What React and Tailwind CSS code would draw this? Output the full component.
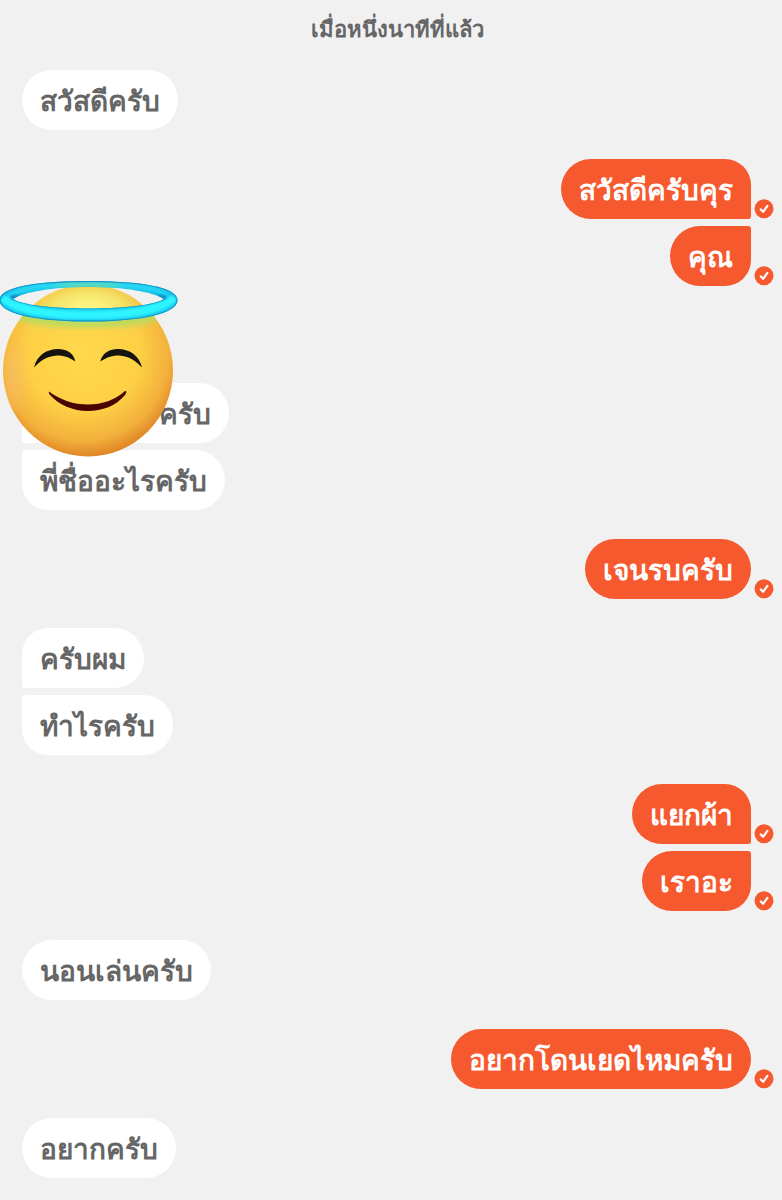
import React from 'react';

const groups = [
  { id: 1, from: 'them', messages: ['สวัสดีครับ'] },
  { id: 2, from: 'me', messages: ['สวัสดีครับคุร', 'คุณ'] },
  { id: 3, from: 'them', sticker: true, messages: ['ครับ', 'พี่ชื่ออะไรครับ'] },
  { id: 4, from: 'me', messages: ['เจนรบครับ'] },
  { id: 5, from: 'them', messages: ['ครับผม', 'ทำไรครับ'] },
  { id: 6, from: 'me', messages: ['แยกผ้า', 'เราอะ'] },
  { id: 7, from: 'them', messages: ['นอนเล่นครับ'] },
  { id: 8, from: 'me', messages: ['อยากโดนเยดไหมครับ'] },
  { id: 9, from: 'them', messages: ['อยากครับ'] },
];

// Consecutive bubbles of one sender get tight corners where they meet
function getCorners(mine, index, count) {
  if (count === 1) return 'rounded-[30px]';
  if (mine) {
    return index === 0
      ? 'rounded-l-[30px] rounded-tr-[26px] rounded-br-[3px]'
      : 'rounded-l-[30px] rounded-br-[26px] rounded-tr-[3px]';
  }
  return index === 0
    ? 'rounded-r-[30px] rounded-tl-[26px] rounded-bl-[3px]'
    : 'rounded-r-[30px] rounded-bl-[26px] rounded-tl-[3px]';
}

function SentMark() {
  return (
    <svg viewBox="0 0 20 20" className="w-5 h-5 shrink-0" role="img" aria-label="Sent">
      <circle cx="10" cy="9.7" r="9.5" fill="#f7592f" />
      <path
        d="M6.8 10.4 L9.1 12.8 L13.4 6.9"
        fill="none"
        stroke="#fff"
        strokeWidth="2.2"
        strokeLinecap="round"
        strokeLinejoin="round"
      />
    </svg>
  );
}

function HaloSticker() {
  return (
    <svg viewBox="0 0 180 180" className="absolute left-0 -top-[37px] w-[180px] h-[180px]" aria-hidden="true">
      <defs>
        <radialGradient id="face" cx="0.47" cy="0.4" r="0.62">
          <stop offset="0" stopColor="#ffd94b" />
          <stop offset="0.55" stopColor="#fdcf45" />
          <stop offset="0.82" stopColor="#f3b03b" />
          <stop offset="1" stopColor="#da7d22" />
        </radialGradient>
        <radialGradient id="crown" cx="0.5" cy="0.7" r="0.6">
          <stop offset="0" stopColor="#fff98c" />
          <stop offset="0.5" stopColor="#f3ea72" stopOpacity="0.8" />
          <stop offset="1" stopColor="#e5cf55" stopOpacity="0" />
        </radialGradient>
        <linearGradient id="ring" x1="0" y1="0" x2="0" y2="1">
          <stop offset="0" stopColor="#16a9da" />
          <stop offset="0.12" stopColor="#24d3f0" />
          <stop offset="0.4" stopColor="#14b4e2" />
          <stop offset="0.6" stopColor="#17c8ee" />
          <stop offset="0.9" stopColor="#1cd2f2" />
          <stop offset="1" stopColor="#109ccb" />
        </linearGradient>
        <clipPath id="head">
          <ellipse cx="88" cy="92.5" rx="85" ry="86" />
        </clipPath>
        <clipPath id="halo">
          <path
            clipRule="evenodd"
            d="M-0.5 22 C-0.5 9 37 3 88.5 3 C140 3 177.5 9 177.5 22 C177.5 36 140 43.5 88.5 43.5 C37 43.5 -0.5 36 -0.5 22 Z M13 21 C24 14 52 9 88.5 9 C125 9 153 14 164 21 C155 27 125 30.5 88.5 30.5 C52 30.5 22 27 13 21 Z"
          />
        </clipPath>
        <filter id="blur1" x="-10%" y="-50%" width="120%" height="200%">
          <feGaussianBlur stdDeviation="1" />
        </filter>
        <filter id="soft" x="-20%" y="-50%" width="140%" height="200%">
          <feGaussianBlur stdDeviation="3" />
        </filter>
        <filter id="softer" x="-100%" y="-50%" width="300%" height="200%">
          <feGaussianBlur stdDeviation="6" />
        </filter>
      </defs>
      <ellipse cx="88" cy="92.5" rx="85" ry="86" fill="url(#face)" />
      <g clipPath="url(#head)">
        <ellipse cx="14" cy="98" rx="6" ry="32" fill="#f7bd72" opacity="0.7" filter="url(#softer)" />
        <ellipse cx="88" cy="20" rx="56" ry="26" fill="url(#crown)" />
        <path d="M8 34 A84 16 0 0 0 169 34" fill="none" stroke="#b4dc62" strokeWidth="8" filter="url(#soft)" />
      </g>
      <g clipPath="url(#halo)">
        <rect x="-1" y="2" width="180" height="43" fill="url(#ring)" />
        <path d="M5 24 C5 14 34 6 88.5 6 C143 6 172 14 172 24" fill="none" stroke="#25d8f4" strokeWidth="3" filter="url(#blur1)" />
        <path d="M5 22 C20 33 55 37 88.5 37 C122 37 157 33 172 22" fill="none" stroke="#2df4ff" strokeWidth="8" strokeLinecap="round" filter="url(#blur1)" />
        <ellipse cx="88" cy="7" rx="34" ry="3" fill="#9fdf7c" opacity="0.6" filter="url(#soft)" />
        <path d="M10 18 L14 22 L20 17 Z M167 18 L163 22 L157 17 Z" fill="#0b7fbd" filter="url(#blur1)" />
        <path d="M-0.5 22 C-0.5 9 37 3 88.5 3 C140 3 177.5 9 177.5 22 C177.5 36 140 43.5 88.5 43.5 C37 43.5 -0.5 36 -0.5 22 Z" fill="none" stroke="#1296c6" strokeWidth="2" />
        <path d="M13 21 C22 27 52 30.5 88.5 30.5 C125 30.5 155 27 164 21" fill="none" stroke="#149fce" strokeWidth="1.5" />
      </g>
      <path d="M34 89.5 C37 77 47 71 58 71 C68 71 74 76 75.3 83.5 C69 79 63 77.5 57 77.5 C47 78 40 83 34 89.5 Z" fill="#17130f" />
      <path d="M142 89.5 C139 77 129 71 118 71 C108 71 102 76 100.3 83.5 C107 79 113 77.5 119 77.5 C129 78 136 83 142 89.5 Z" fill="#17130f" />
      <path d="M49 113.5 C60 122 74 126.5 88 126.5 C102 126.5 115 122 125 113 C127 113 126.5 115 125 117 C116 128 102 133 88 133 C73 133 59 127 50 117 C49 115.5 48.5 114 49 113.5 Z" fill="#4a0303" />
    </svg>
  );
}

function Bubble({ text, mine, corners, wide }) {
  return (
    <li className="flex items-end gap-[3px]">
      <p
        className={`h-[60px] px-[18px] pt-0.5 leading-[60px] text-[28px] font-semibold whitespace-nowrap ${corners} ${
          mine ? 'bg-[#f7592f] text-white' : 'bg-white text-[#666666]'
        } ${wide ? 'w-[207px] text-right' : ''}`}
      >
        {text}
      </p>
      {mine && <SentMark />}
    </li>
  );
}

function MessageGroup({ group }) {
  const mine = group.from === 'me';
  return (
    <section className={`relative flex flex-col ${group.sticker ? 'pt-[68px]' : ''}`}>
      <ul className={`flex flex-col gap-[7px] ${mine ? 'items-end pr-2' : 'items-start pl-[22px]'}`}>
        {group.messages.map((text, i) => (
          <Bubble
            key={text}
            text={text}
            mine={mine}
            corners={getCorners(mine, i, group.messages.length)}
            wide={group.sticker && i === 0}
          />
        ))}
      </ul>
      {group.sticker && <HaloSticker />}
    </section>
  );
}

function App() {
  return (
    <div
      lang="th"
      className="min-h-screen w-full overflow-hidden bg-[#f1f1f1] pb-5 font-['Liberation_Sans',sans-serif]"
    >
      <header className="flex h-[70px] justify-center pt-3.5 pl-3">
        <time className="text-[22px] leading-8 font-semibold text-[#666666]">เมื่อหนึ่งนาทีที่แล้ว</time>
      </header>
      <main className="flex flex-col gap-[29px]">
        {groups.map((group) => (
          <MessageGroup key={group.id} group={group} />
        ))}
      </main>
    </div>
  );
}

export default App;
